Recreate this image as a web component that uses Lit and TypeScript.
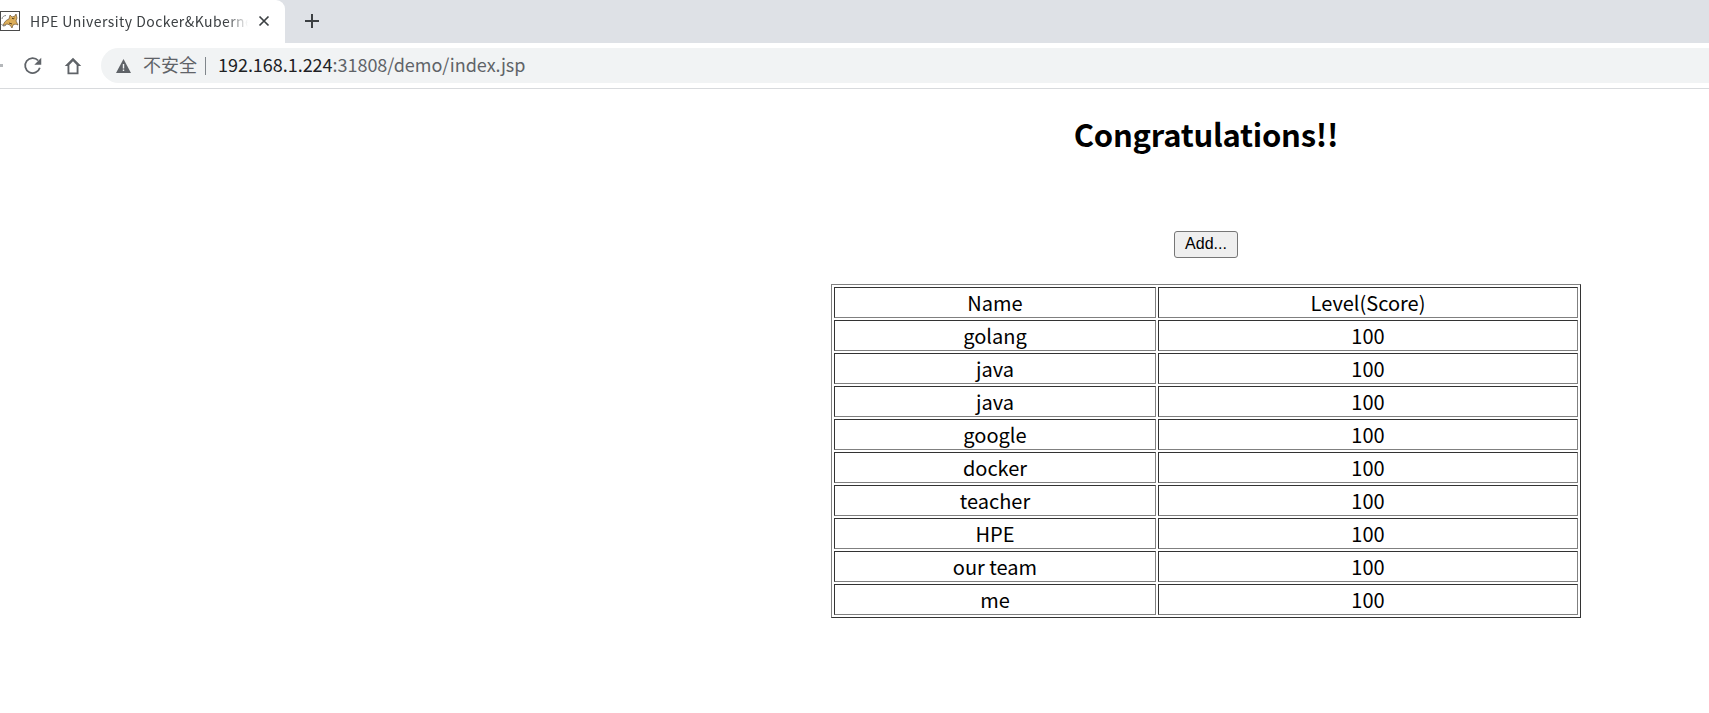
import { LitElement, html, css, svg } from 'lit';
import { customElement } from 'lit/decorators.js';

const ROWS = ['golang', 'java', 'java', 'google', 'docker', 'teacher', 'HPE', 'our team', 'me'];

const TOMCAT = svg`
  <rect x="0.5" y="0.5" width="19" height="19" fill="#fff" stroke="#4a4a4a"/>
  <path d="M3 15c1-4 3-6 6-7l1-4 2 2 3-1 1-2 1 4-1 3 2 4c-2-1-3-1-5 0l-1 3-2-3-3-1z" fill="#dcae5a" stroke="#5c4220" stroke-width=".6"/>
  <path d="M2 8c0-2 2-3.500 4-3.500M1.500 13c1 2 3 2.500 4.500 1" fill="none" stroke="#888" stroke-width="1"/>
  <path d="M12 7l1 1 1.500-1M9 12l3 1" fill="none" stroke="#3f2c12" stroke-width=".8"/>
`;

@customElement('app-root')
export class AppRoot extends LitElement {
  static styles = css`
    :host {
      display: block;
      height: 713px;
      overflow: hidden;
      background: #fff;
      font-family: 'Noto Sans CJK SC', 'Noto Sans', sans-serif;
      color: #000;
    }

    .tabstrip {
      display: flex;
      align-items: stretch;
      height: 43px;
      background: #dee1e6;
    }

    .tab {
      display: flex;
      align-items: center;
      width: 285px;
      box-sizing: border-box;
      padding-bottom: 1px;
      background: #fff;
      border-top-right-radius: 9px;
    }

    .favicon {
      width: 20px;
      height: 20px;
      flex: none;
    }

    .tab-title {
      width: 218px;
      margin-left: 10px;
      font-size: 14px;
      letter-spacing: 0.45px;
      line-height: 20px;
      white-space: nowrap;
      overflow: hidden;
      color: #3c4043;
      -webkit-mask-image: linear-gradient(to right, #000 90%, transparent);
      mask-image: linear-gradient(to right, #000 90%, transparent);
    }

    .tab-close {
      width: 12px;
      height: 12px;
      margin-left: 10px;
      flex: none;
    }

    .new-tab {
      width: 16px;
      height: 16px;
      margin: 13px 0 0 19px;
      flex: none;
    }

    .toolbar {
      display: flex;
      align-items: center;
      height: 46px;
      box-sizing: border-box;
      border-bottom: 1px solid #d8dadd;
      background: #fff;
    }

    .back-stub {
      width: 3px;
      height: 3px;
      background: #b5b8bb;
      flex: none;
    }

    .tool {
      flex: none;
      width: 22px;
      height: 22px;
    }

    .tool.reload {
      margin-left: 19px;
    }

    .tool.home {
      margin-left: 18px;
    }

    .omnibox {
      flex: 1;
      display: flex;
      align-items: center;
      height: 35px;
      margin-left: 17px;
      padding-left: 15px;
      border-radius: 18px 0 0 18px;
      background: #f1f3f4;
      font-size: 18px;
      line-height: 33px;
      color: #5f6368;
      white-space: nowrap;
    }

    .warn {
      width: 15px;
      height: 14px;
      flex: none;
    }

    .insecure {
      margin-left: 12px;
      margin-bottom: 2px;
    }

    .divider {
      width: 1px;
      height: 18px;
      margin: 0 12px 0 8px;
      background: #80868b;
    }

    .url {
      margin-bottom: 2px;
      letter-spacing: -0.03px;
    }

    .host {
      color: #202124;
    }

    .page {
      box-sizing: border-box;
      width: 750px;
      margin-left: 831px;
    }

    h1 {
      margin: 18px 0 0;
      height: 53px;
      font-size: 31px;
      letter-spacing: -0.25px;
      line-height: 53px;
      font-weight: 700;
      text-align: center;
    }

    .actions {
      display: flex;
      justify-content: center;
      margin-top: 71px;
    }

    .add {
      width: 64px;
      height: 27px;
      padding: 0 0 1px;
      box-sizing: border-box;
      border: 1px solid #767676;
      border-radius: 3px;
      background: #efefef;
      font-family: 'Liberation Sans', Arial, sans-serif;
      font-size: 16px;
      color: #000;
    }

    .scores {
      width: 750px;
      margin-top: 26px;
      table-layout: fixed;
      border-collapse: separate;
      border-spacing: 2px;
      border: 1px solid;
      border-color: #808080 #333 #333 #808080;
    }

    .scores td {
      box-sizing: border-box;
      height: 31px;
      padding: 0;
      border: 1px solid;
      border-color: #333 #808080 #808080 #333;
      font-size: 20px;
      line-height: 29px;
      text-align: center;
    }

    .name-col {
      width: 322px;
    }
  `;

  render() {
    return html`
      <div class="tabstrip">
        <div class="tab">
          <svg class="favicon" viewBox="0 0 20 20">${TOMCAT}</svg>
          <span class="tab-title">HPE University Docker&Kubernetes</span>
          <svg class="tab-close" viewBox="0 0 12 12">
            <path d="M1.500 1.500l9 9M10.500 1.500l-9 9" stroke="#3c4043" stroke-width="1.700" fill="none" />
          </svg>
        </div>
        <svg class="new-tab" viewBox="0 0 16 16">
          <path d="M8 1v14M1 8h14" stroke="#3c4043" stroke-width="2" fill="none" />
        </svg>
      </div>
      <div class="toolbar">
        <span class="back-stub"></span>
        <svg class="tool reload" viewBox="0 0 20 20">
          <path d="M16.200 11.500A6.800 6.800 0 1 1 14.700 5" fill="none" stroke="#5f6368" stroke-width="1.600" />
          <path d="M17.500 2.500v6.300h-6.300z" fill="#5f6368" />
        </svg>
        <svg class="tool home" viewBox="0 0 20 20">
          <path d="M10 2.500L2.500 10h2.500v7.500h10V10h2.500z M6.700 15.900V9l3.300-3.300L13.300 9v6.900z" fill="#5f6368" fill-rule="evenodd" />
        </svg>
        <div class="omnibox">
          <svg class="warn" viewBox="0 0 15 14">
            <path d="M7.500 0L15 14H0z" fill="#5f6368" />
            <path d="M6.800 5h1.400v4.500H6.800zM6.800 10.500h1.400V12H6.800z" fill="#f1f3f4" />
          </svg>
          <span class="insecure">不安全</span>
          <span class="divider"></span>
          <span class="url"><span class="host">192.168.1.224</span>:31808/demo/index.jsp</span>
        </div>
      </div>
      <main class="page">
        <h1>Congratulations!!</h1>
        <div class="actions"><button class="add">Add...</button></div>
        <table class="scores">
          <tbody>
            <tr><td class="name-col">Name</td><td>Level(Score)</td></tr>
            ${ROWS.map((name) => html`<tr><td>${name}</td><td>100</td></tr>`)}
          </tbody>
        </table>
      </main>
    `;
  }
}
